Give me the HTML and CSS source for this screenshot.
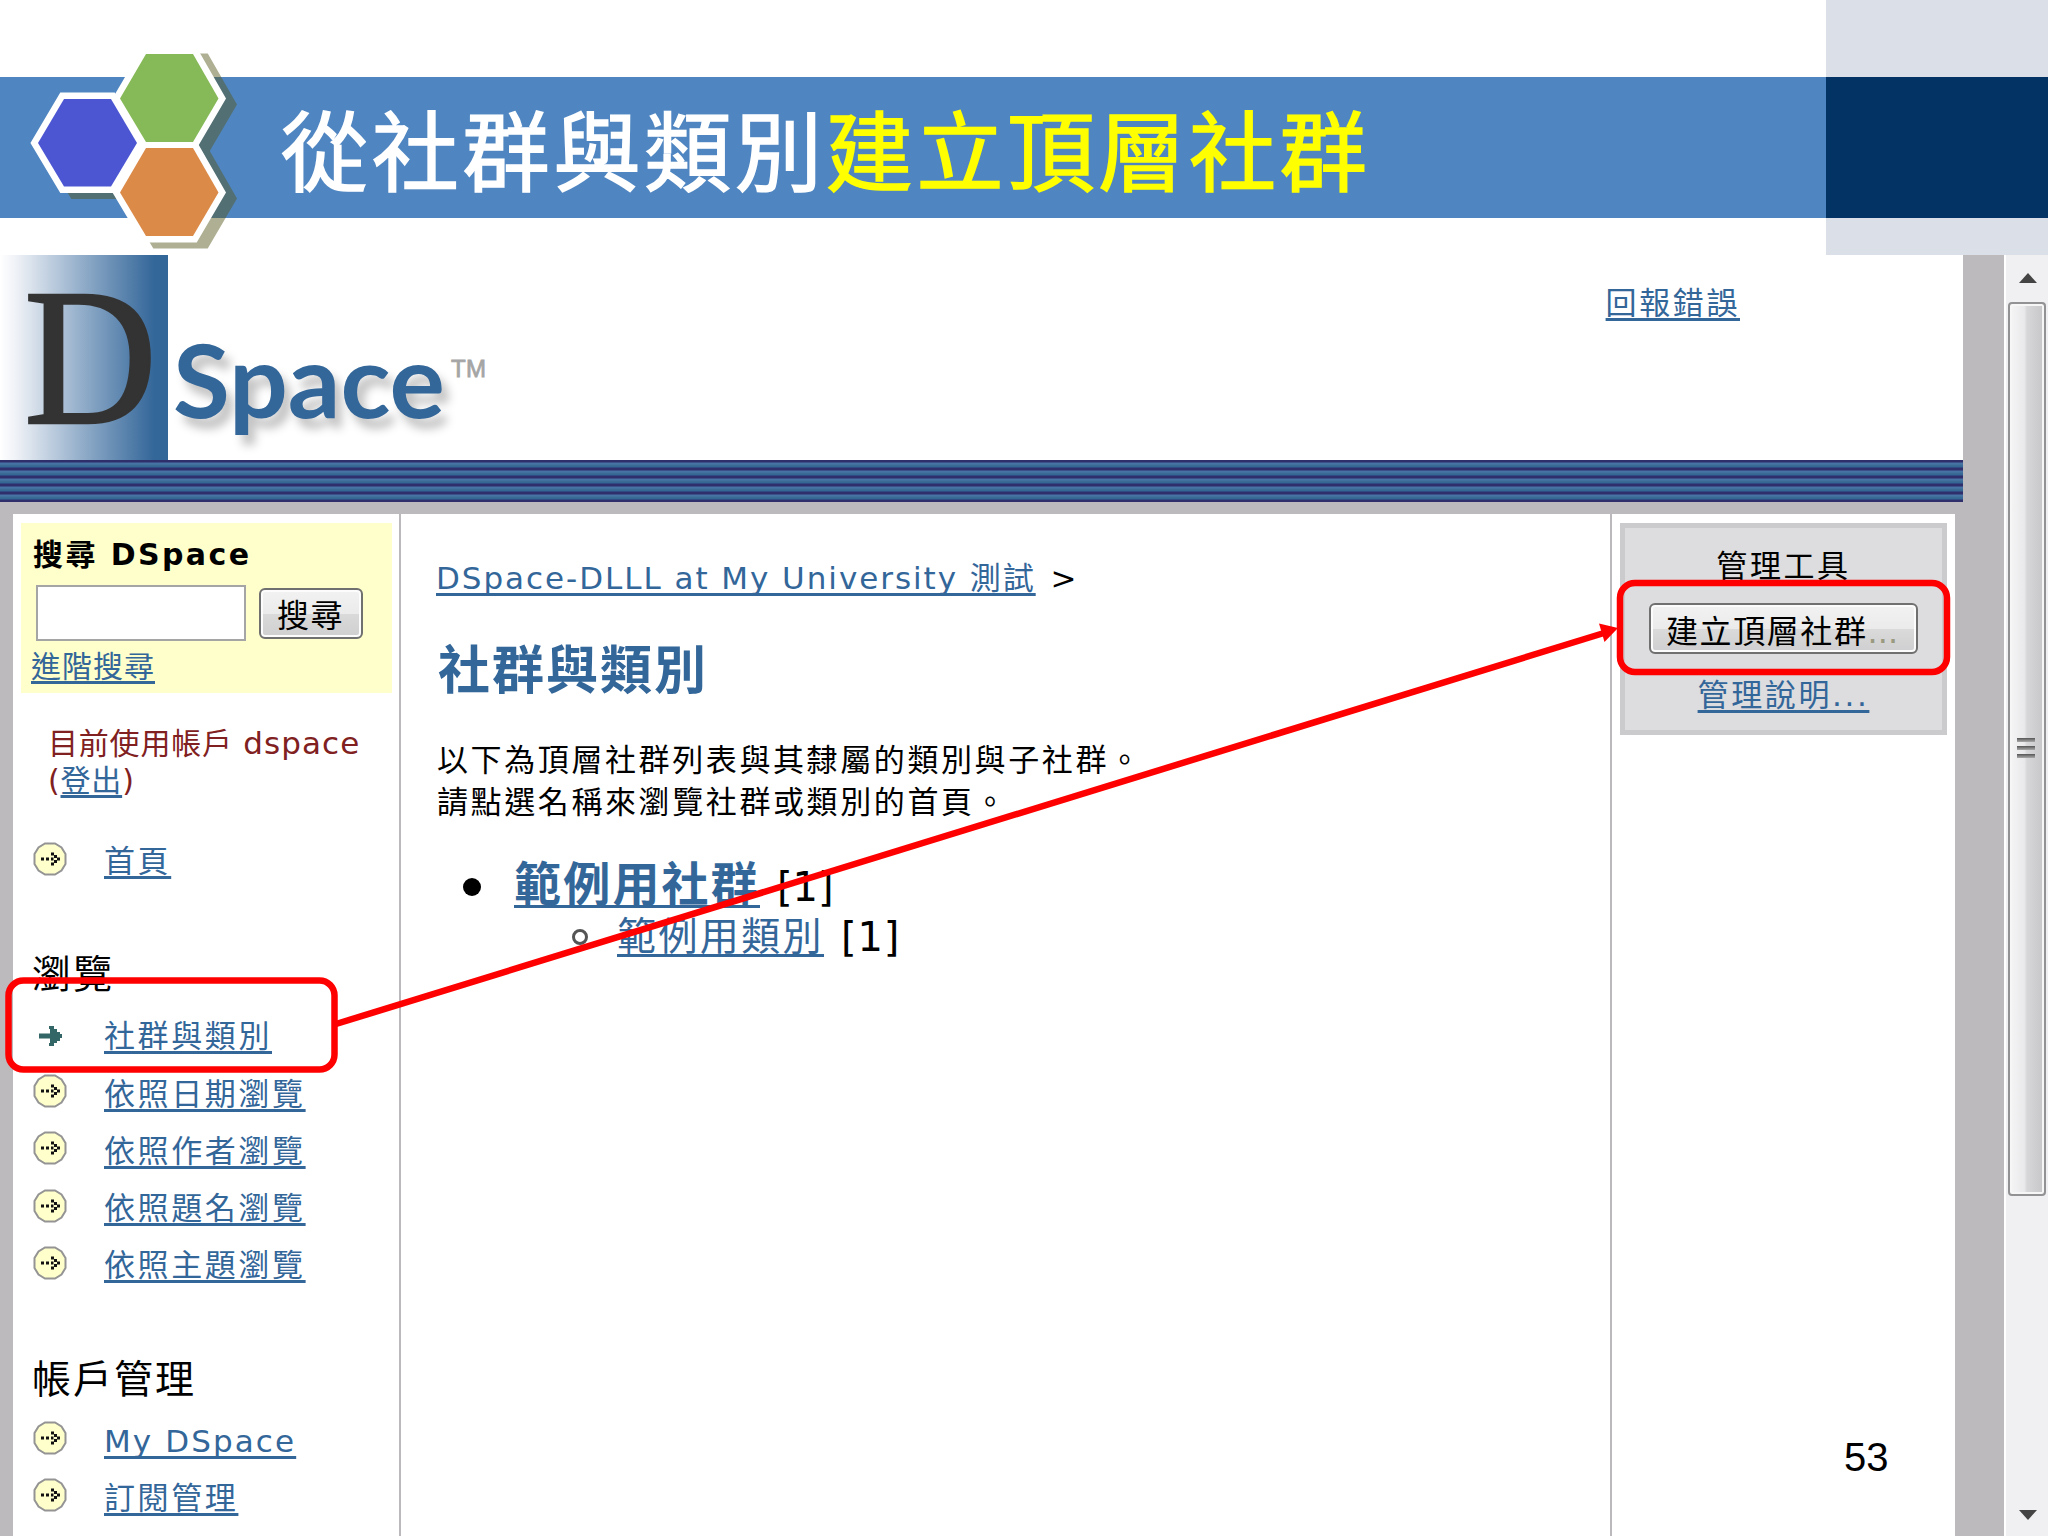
FILE: index.html
```html
<!DOCTYPE html>
<html lang="zh-Hant">
<head>
  <meta charset="UTF-8" />
  <title>從社群與類別建立頂層社群</title>
  <link rel="stylesheet" href="styles.css">
</head>
<body>
  <!-- shared menu icons -->
  <svg class="defs" width="0" height="0">
    <symbol id="dot-arrow" viewBox="0 0 34 34">
      <path d="M12 1.500H22L28.500 5.500L32.500 12V22L28.500 28.500L22 32.500H12L5.500 28.500L1.500 22V12L5.500 5.500Z" fill="#ffffcc" stroke="#949494" stroke-width="2"/>
      <path d="M8 15.500h3v3H8zM13 15.500h3v3h-3zM18 10.500h3v3h-3zM21 13h3v3h-3zM24 15.500h3v3h-3zM18 15.500h2.500v3h-2.500zM21 18h3v3h-3zM18 20.500h3v3h-3z" fill="#111"/>
    </symbol>
    <symbol id="solid-arrow" viewBox="0 0 34 34">
      <path d="M6 14.500H17V10H16V7H21V10H24V13H27V15H29V19H27V22H24V24H21V27H16V24H17V19.500H6Z" fill="#336666"/>
    </symbol>
  </svg>

  <div class="slide">
    <header class="slide-header">
      <div class="band">
        <h1 class="slide-title">從社群與類別<span class="highlight">建立頂層社群</span></h1>
      </div>
      <div class="corner"><div class="corner-block"></div></div>
      <svg class="hexagons" width="250" height="255" viewBox="0 0 250 255">
        <g class="hex-shadow" transform="translate(11 6)">
          <polygon points="146,54 193,54 218.500,98.500 193,142 146,142 120,98.500"/>
          <polygon points="64,99 111,99 137,143 111,186.500 64,186.500 38,143"/>
          <polygon points="146,148 193,148 218.500,192.500 193,236 146,236 120,192.500"/>
        </g>
        <g class="hex-outline">
          <polygon points="146,54 193,54 218.500,98.500 193,142 146,142 120,98.500"/>
          <polygon points="64,99 111,99 137,143 111,186.500 64,186.500 38,143"/>
          <polygon points="146,148 193,148 218.500,192.500 193,236 146,236 120,192.500"/>
        </g>
        <polygon points="146,54 193,54 218.500,98.500 193,142 146,142 120,98.500" fill="#86b957"/>
        <polygon points="64,99 111,99 137,143 111,186.500 64,186.500 38,143" fill="#4c56d2"/>
        <polygon points="146,148 193,148 218.500,192.500 193,236 146,236 120,192.500" fill="#dc8a48"/>
      </svg>
    </header>

    <div class="browser">
      <div class="page">
        <div class="banner">
          <svg class="logo" width="520" height="205" viewBox="0 0 520 205">
            <defs>
              <linearGradient id="logoFade">
                <stop offset="0" stop-color="#fff"/>
                <stop offset="0.1" stop-color="#eef1f6"/>
                <stop offset="0.5" stop-color="#8fabc8"/>
                <stop offset="0.92" stop-color="#336699"/>
              </linearGradient>
            </defs>
            <rect width="168" height="205" fill="url(#logoFade)"/>
            <text class="logo-d" x="24" y="168" textLength="133" lengthAdjust="spacingAndGlyphs">D</text>
            <text class="logo-space" x="173" y="163" textLength="272" lengthAdjust="spacingAndGlyphs">Space</text>
            <text class="logo-tm" x="451" y="122" textLength="35">TM</text>
          </svg>
          <a class="report">回報錯誤</a>
        </div>
        <div class="stripes"></div>

        <div class="columns">
          <nav class="sidebar">
            <div class="search-box">
              <div class="search-title">搜尋 <span>DSpace</span></div>
              <div class="search-row">
                <div class="search-input"></div>
                <div class="button search-button">搜尋</div>
              </div>
              <a class="advanced">進階搜尋</a>
            </div>
            <p class="user">目前使用帳戶 <span>dspace</span><br>(<a>登出</a>)</p>

            <div class="menu-item"><svg><use href="#dot-arrow"/></svg><a>首頁</a></div>

            <h3>瀏覽</h3>
            <div class="menu-item current"><svg><use href="#solid-arrow"/></svg><a>社群與類別</a></div>
            <div class="menu-item"><svg><use href="#dot-arrow"/></svg><a>依照日期瀏覽</a></div>
            <div class="menu-item"><svg><use href="#dot-arrow"/></svg><a>依照作者瀏覽</a></div>
            <div class="menu-item"><svg><use href="#dot-arrow"/></svg><a>依照題名瀏覽</a></div>
            <div class="menu-item"><svg><use href="#dot-arrow"/></svg><a>依照主題瀏覽</a></div>

            <h3>帳戶管理</h3>
            <div class="menu-item"><svg><use href="#dot-arrow"/></svg><a class="latin">My DSpace</a></div>
            <div class="menu-item"><svg><use href="#dot-arrow"/></svg><a>訂閱管理</a></div>
          </nav>

          <main class="content">
            <div class="breadcrumb"><a>DSpace-DLLL at My University 測試</a> <span>&gt;</span></div>
            <h2>社群與類別</h2>
            <p>以下為頂層社群列表與其隸屬的類別與子社群。<br>請點選名稱來瀏覽社群或類別的首頁。</p>
            <div class="community"><i class="disc"></i><a>範例用社群</a><span>[1]</span></div>
            <div class="collection"><i class="ring"></i><a>範例用類別</a><span>[1]</span></div>
          </main>

          <aside class="right">
            <div class="admin-box">
              <div class="admin-title">管理工具</div>
              <div class="button admin-button">建立頂層社群<span>...</span></div>
              <a class="admin-help">管理說明...</a>
            </div>
          </aside>
        </div>
      </div>

      <div class="scrollbar">
        <svg class="arrow-up" width="20" height="12"><path d="M10 1L19 11H1Z" fill="#444"/></svg>
        <div class="thumb"><i></i><i></i><i></i></div>
        <svg class="arrow-down" width="20" height="12"><path d="M1 1H19L10 11Z" fill="#444"/></svg>
      </div>
    </div>

    <!-- annotations on top of the page -->
    <svg class="marks" width="2048" height="1536" viewBox="0 0 2048 1536">
      <rect x="8.500" y="980.500" width="326" height="89" rx="15"/>
      <rect x="1620" y="583" width="327" height="89" rx="15"/>
      <line x1="336" y1="1024" x2="1604" y2="633"/>
      <polygon points="1618,628 1599,623.500 1604.500,642"/>
    </svg>
    <div class="page-number">53</div>
  </div>
</body>
</html>
```
FILE: styles.css
```css
* {
  box-sizing: border-box;
}

body {
  margin: 0;
  font-family: "DejaVu Sans", "Noto Sans CJK TC", sans-serif;
  background: #fff;
  color: #000;
}

h1, h2, h3, p {
  margin: 0;
  font-weight: normal;
}

a {
  color: #336699;
  text-decoration: underline;
  text-decoration-thickness: 3px;
  text-underline-offset: 4px;
  text-decoration-skip-ink: none;
}

.defs {
  position: absolute;
}

.slide {
  position: relative;
  width: 2048px;
  height: 1536px;
  overflow: hidden;
  display: flex;
  flex-direction: column;
}

/* slide header */
.slide-header {
  position: relative;
  height: 255px;
  display: flex;
  align-items: stretch;
}

.band {
  width: 1826px;
  height: 141px;
  margin-top: 77px;
  background: #4f86c1;
  padding-left: 281px;
}

.slide-title {
  font-family: "Noto Sans CJK TC", sans-serif;
  font-size: 87px;
  line-height: 141px;
  letter-spacing: 3.8px;
  color: #fff;
  white-space: nowrap;
  -webkit-text-stroke: 1.6px currentColor;
}

.highlight {
  color: #ffff00;
}

.corner {
  flex: 1;
  background: #dbdfe8;
  padding-top: 77px;
}

.corner-block {
  height: 141px;
  background: #023364;
}

.hexagons {
  position: absolute;
  left: 0;
  top: 0;
}

.hex-shadow {
  opacity: 0.47;
  fill: #57571c;
  stroke: #57571c;
  stroke-width: 13px;
}

.hex-outline {
  fill: #fff;
  stroke: #fff;
  stroke-width: 13px;
}

/* browser window */
.browser {
  flex: 1;
  min-height: 0;
  display: flex;
  background: #bcbabd;
}

.page {
  width: 2004px;
  display: flex;
  flex-direction: column;
}

.banner {
  width: 1963px;
  height: 205px;
  background: #fff;
  display: flex;
  justify-content: space-between;
  padding-right: 223px;
}

.logo {
  overflow: visible;
}

.logo-d {
  font-family: "Liberation Serif", serif;
  font-size: 194px;
  fill: #333;
  stroke: #333;
  stroke-width: 2.5px;
}

.logo-space {
  font-family: Lato, sans-serif;
  font-weight: bold;
  font-size: 101px;
  fill: #336699;
  filter: drop-shadow(7px 10px 5px rgba(0, 0, 0, 0.24));
}

.logo-tm {
  font-family: "Liberation Sans", sans-serif;
  font-size: 24px;
  fill: #a5a5a5;
  stroke: #a5a5a5;
  stroke-width: 0.8px;
}

.report {
  margin-top: 28px;
  font-size: 31px;
  line-height: 40px;
  letter-spacing: 2.6px;
  height: 40px;
}

.stripes {
  width: 1963px;
  height: 42px;
  background: repeating-linear-gradient(#2f2f6c 0, #2f2f6c 2px, #4672a4 3px, #4672a4 4px, #35698f 6px, #35659a 7px, #2f2f6c 8px);
}

.columns {
  flex: 1;
  margin: 12px 49px 0 13px;
  background: #fff;
  display: flex;
  min-height: 0;
}

.sidebar {
  width: 388px;
  padding: 9px 7px 0 8px;
  border-right: 2px solid #bbb9bc;
}

.search-box {
  height: 170px;
  width: 371px;
  padding: 12px 0 0 12px;
  background: #ffffcc;
}

.search-title {
  font-size: 30px;
  line-height: 40px;
  font-weight: bold;
  letter-spacing: 2.4px;
}

.search-row {
  display: flex;
  align-items: center;
  margin: 10px 0 0 3px;
}

.search-input {
  width: 210px;
  height: 56px;
  background: #fff;
  border: 2px solid #a5a5a5;
  margin-right: 13px;
}

.button {
  border: 2px solid #707070;
  border-radius: 6px;
  box-shadow: inset 0 0 0 2px #fcfcfc;
  background: linear-gradient(#f2f2f2, #ebebeb 50%, #dadada 51%, #cfcfd1);
  display: flex;
  justify-content: center;
  align-items: center;
  font-size: 32px;
  line-height: 40px;
  letter-spacing: 1.6px;
  white-space: nowrap;
}

.search-button {
  width: 104px;
  height: 51px;
  padding: 5px 1px 0 0;
}

.advanced {
  display: block;
  width: max-content;
  margin-top: 7px;
  margin-left: -2px;
  font-size: 30px;
  line-height: 38px;
  letter-spacing: 1px;
}

.user {
  margin: 32px 0 33px 27px;
  font-size: 30px;
  line-height: 37px;
  letter-spacing: 0.8px;
  color: #802020;
  white-space: nowrap;
}

.user span {
  font-size: 31px;
  letter-spacing: 1.1px;
}

.menu-item {
  height: 57.25px;
  display: flex;
  align-items: center;
  padding-left: 12px;
  font-size: 31px;
  line-height: 40px;
  letter-spacing: 2.6px;
}

.menu-item svg {
  width: 34px;
  height: 34px;
  margin: 0 37px 4px 0;
}

.menu-item.current svg {
  margin-bottom: 0;
}

.menu-item a {
  margin-top: 1px;
}

.menu-item .latin {
  letter-spacing: 2.1px;
}

.sidebar h3 {
  margin: 61px 0 7px 11px;
  font-size: 39px;
  line-height: 50px;
  letter-spacing: 2px;
}

/* middle column */
.content {
  width: 1211px;
  padding: 44px 0 0 35px;
  border-right: 2px solid #bbb9bc;
}

.breadcrumb {
  font-size: 31px;
  line-height: 40px;
  letter-spacing: 1.95px;
  white-space: nowrap;
}

.breadcrumb span {
  margin-left: 3px;
}

.content h2 {
  margin-top: 43px;
  padding-left: 2px;
  font-size: 52px;
  line-height: 60px;
  letter-spacing: 2px;
  font-weight: bold;
  color: #336699;
}

.content p {
  margin: 38px 0 36px 1px;
  font-size: 31px;
  line-height: 42px;
  letter-spacing: 2.6px;
  white-space: nowrap;
}

.community,
.collection {
  display: flex;
  align-items: center;
  height: 52px;
  line-height: 52px;
  font-size: 40px;
}

.community {
  padding-left: 27px;
}

.community a {
  font-size: 47px;
  font-weight: bold;
  letter-spacing: 2.2px;
  margin-right: 17px;
}

.community span {
  margin-top: 4px;
}

.collection {
  padding-left: 136px;
}

.collection a {
  font-size: 39px;
  letter-spacing: 2.4px;
  margin-right: 17px;
}

.collection span {
  letter-spacing: 0.8px;
}

.disc {
  width: 18px;
  height: 18px;
  border-radius: 50%;
  background: #000;
  margin: 4px 33px 0 0;
}

.ring {
  width: 16px;
  height: 16px;
  border: 3px solid #555;
  border-radius: 50%;
  margin-right: 29px;
}

/* right column */
.right {
  flex: 1;
  padding: 9px 8px 0;
}

.admin-box {
  height: 212px;
  border: 5px solid #cbcacc;
  background: #dddcde;
  display: flex;
  flex-direction: column;
  align-items: center;
  font-size: 31px;
  line-height: 40px;
  letter-spacing: 2.6px;
}

.admin-title {
  margin-top: 18px;
}

.admin-button {
  width: 269px;
  height: 51px;
  margin-top: 17px;
  padding: 6px 3px 0 0;
}

.admin-button span {
  color: #9a9a80;
  letter-spacing: 0;
}

.admin-help {
  margin-top: 21px;
}

/* scrollbar */
.scrollbar {
  width: 44px;
  background: #f0eff1;
  border-left: 2px solid #fff;
  display: flex;
  flex-direction: column;
  align-items: center;
}

.arrow-up {
  margin: 17px 0 18px 2px;
}

.thumb {
  width: 38px;
  height: 894px;
  border: 2px solid #929193;
  border-radius: 4px;
  box-shadow: inset 0 0 0 2px #f6f6f6;
  background: linear-gradient(90deg, #f5f5f6, #e9e8ea 42%, #d7d6d8 50%, #c6c5c8);
  display: flex;
  flex-direction: column;
  align-items: center;
  justify-content: center;
  gap: 4px;
  padding: 0 3px 3px 0;
}

.thumb i {
  width: 18px;
  height: 4px;
  background: linear-gradient(#555, #aaa);
}

.arrow-down {
  margin: auto 0 15px 2px;
}

/* annotations */
.marks {
  position: absolute;
  left: 0;
  top: 0;
}

.marks rect,
.marks line {
  fill: none;
  stroke: #ff0000;
  stroke-width: 6.5px;
}

.marks polygon {
  fill: #ff0000;
}

.page-number {
  position: absolute;
  left: 1844px;
  top: 1434px;
  font-family: "Liberation Sans", sans-serif;
  font-size: 40px;
  line-height: 46px;
}
```
